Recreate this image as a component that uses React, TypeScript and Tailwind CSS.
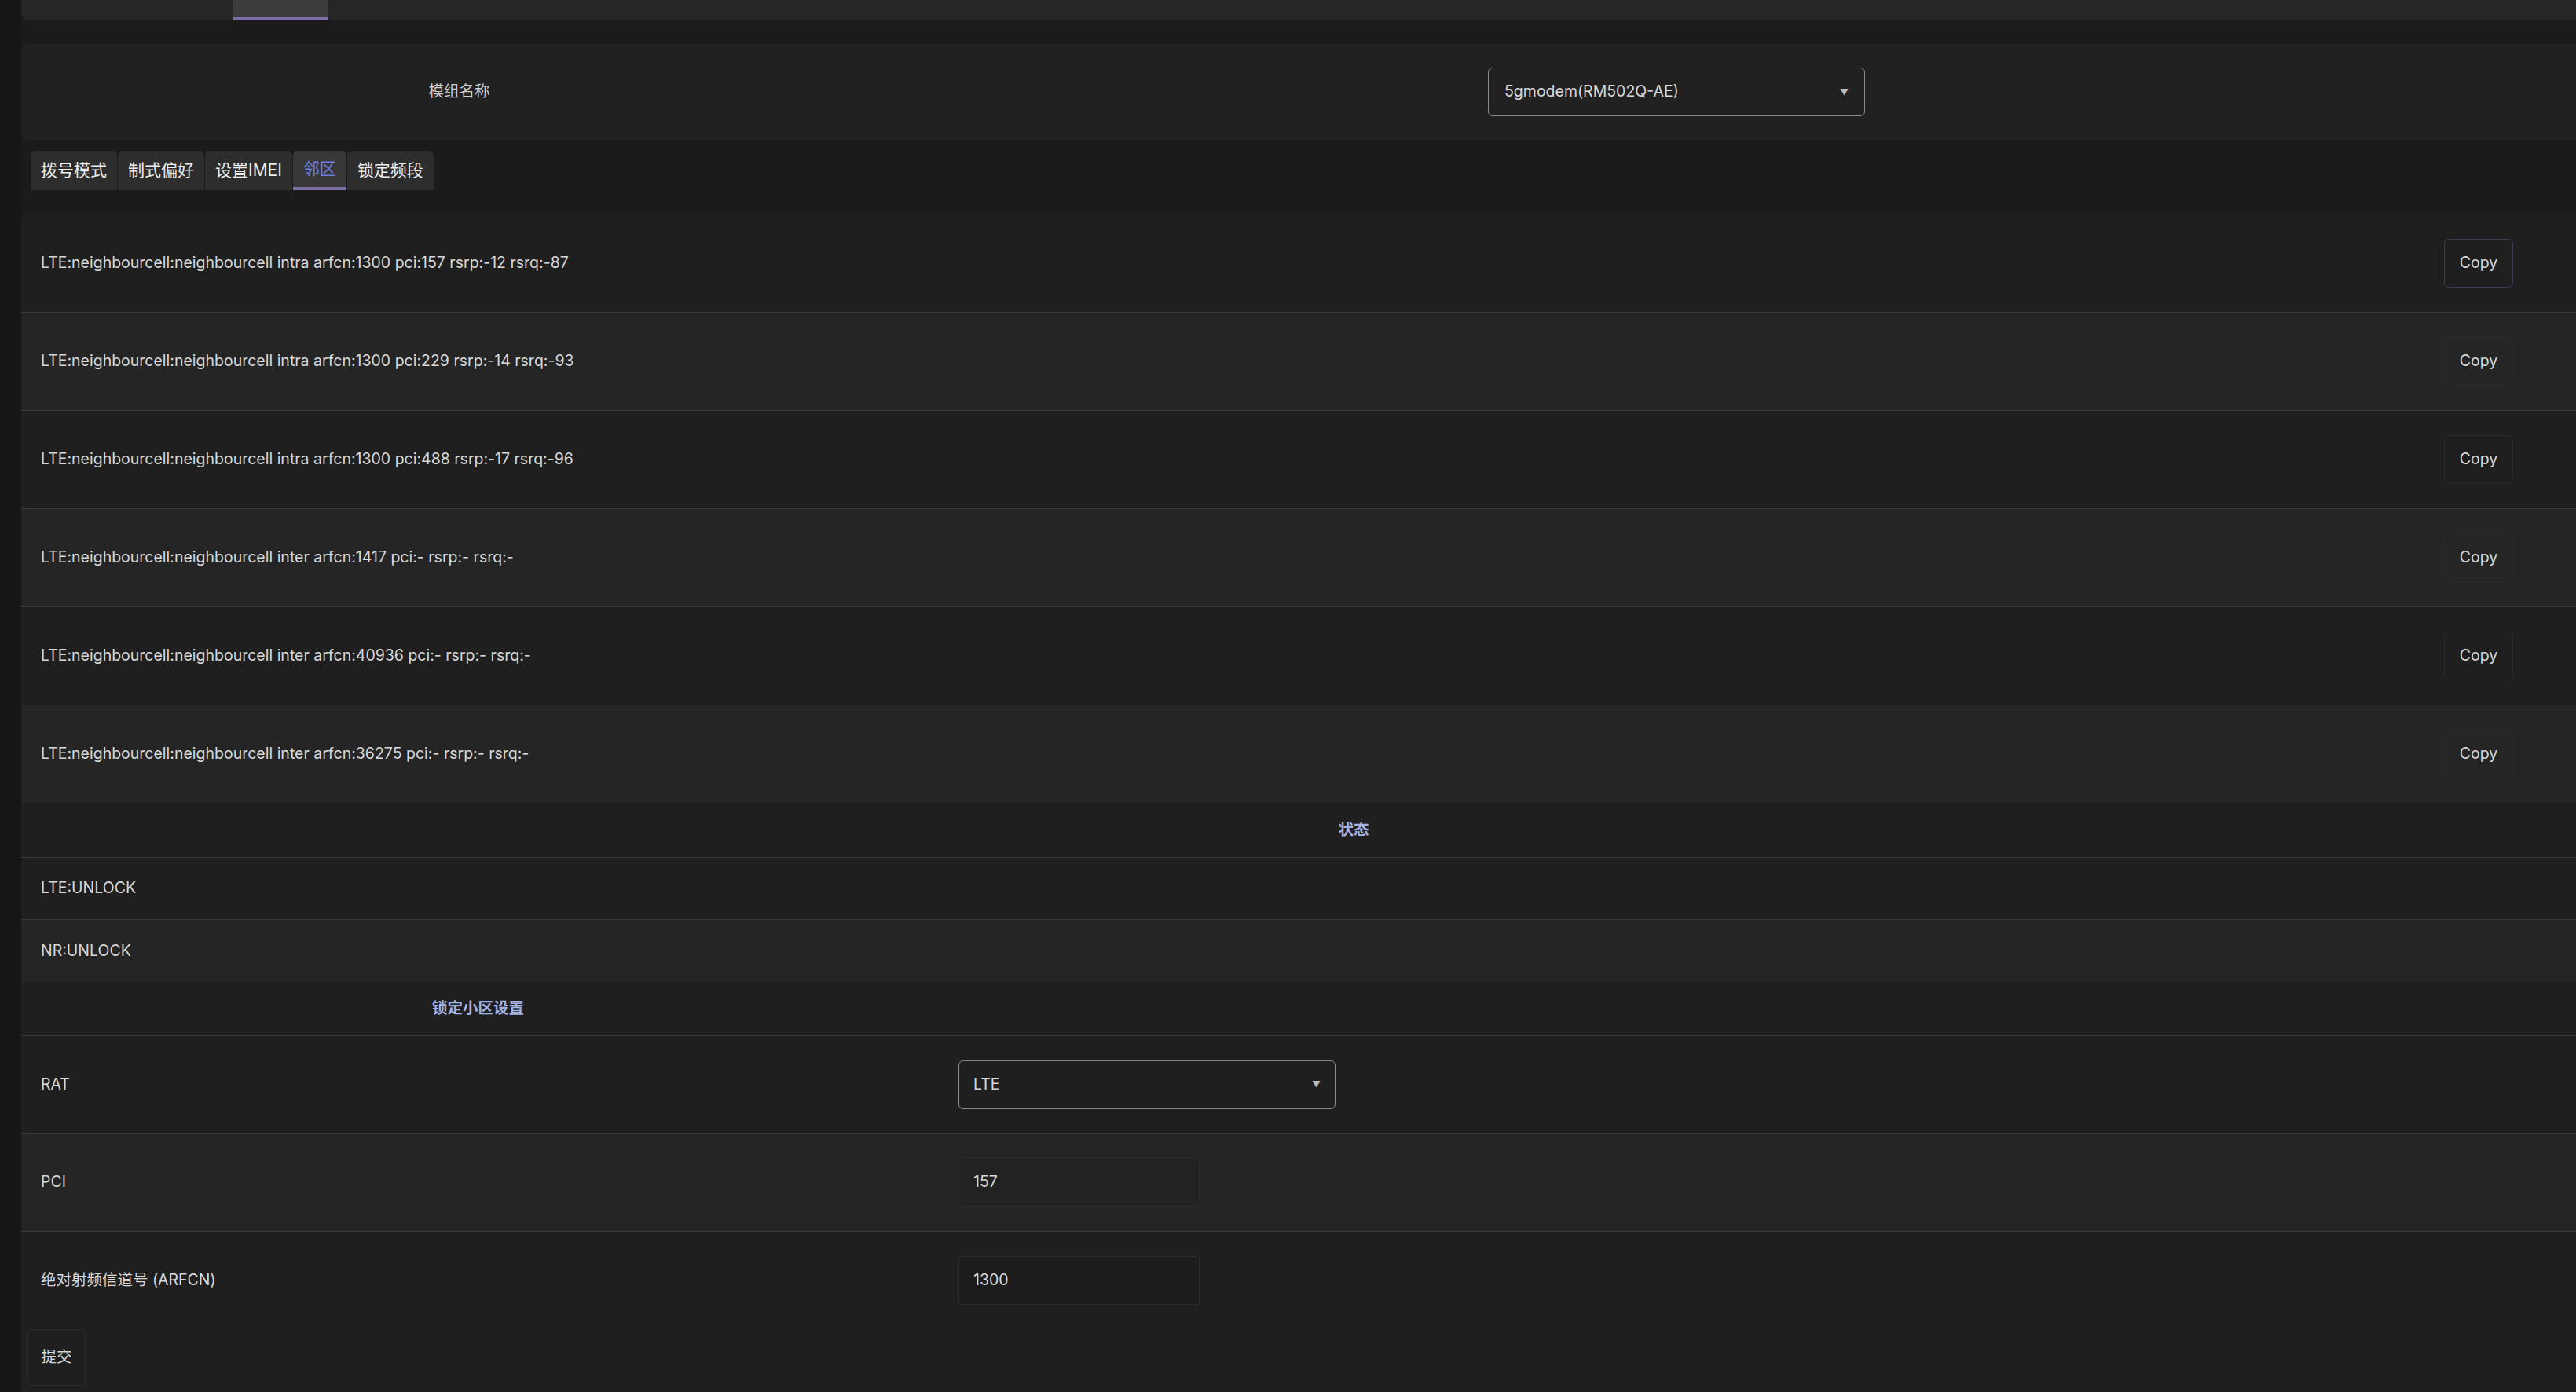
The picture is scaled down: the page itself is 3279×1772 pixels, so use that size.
import React from "react";

const rows = [
  "LTE:neighbourcell:neighbourcell intra arfcn:1300 pci:157 rsrp:-12 rsrq:-87",
  "LTE:neighbourcell:neighbourcell intra arfcn:1300 pci:229 rsrp:-14 rsrq:-93",
  "LTE:neighbourcell:neighbourcell intra arfcn:1300 pci:488 rsrp:-17 rsrq:-96",
  "LTE:neighbourcell:neighbourcell inter arfcn:1417 pci:- rsrp:- rsrq:-",
  "LTE:neighbourcell:neighbourcell inter arfcn:40936 pci:- rsrp:- rsrq:-",
  "LTE:neighbourcell:neighbourcell inter arfcn:36275 pci:- rsrp:- rsrq:-",
];

const Caret = () => <span className="text-[11px] text-[#bbb]">▼</span>;

export default function App() {
  const tabs = ["拨号模式", "制式偏好", "设置IMEI", "邻区", "锁定频段"];
  return (
    <div
      className="w-[3279px] h-[1772px] bg-[#1b1b1b] text-[#d8d8d8] text-[19.5px] overflow-hidden flex"
      style={{ fontFamily: "Inter, 'Noto Sans CJK SC', sans-serif" }}
    >
      <div className="w-[27px] shrink-0 bg-[#161616]" />
      <div className="flex-1 flex flex-col">
        <div className="h-[26px] shrink-0 bg-[#262626] rounded-bl-[10px] flex">
          <div className="w-[270px]" />
          <div className="w-[121px] bg-[#3c3c3c] border-b-[4px] border-[#7c6fa6]" />
        </div>
        <div className="h-[30px] shrink-0" />
        <div className="h-[122px] shrink-0 bg-[#212121] rounded-l-[10px] flex items-center">
          <div className="w-[1195px] flex justify-center text-[#cfcfcf]">
            <span className="ml-[-80px]">模组名称</span>
          </div>
          <div className="flex-1 flex justify-center">
            <div className="w-[480px] h-[62px] border border-[#8a8a8a] rounded-[6px] flex items-center justify-between px-[20px] ml-[-233px]">
              <span>5gmodem(RM502Q-AE)</span>
              <Caret />
            </div>
          </div>
        </div>
        <div className="flex mt-[14px] ml-[12px] h-[50px] shrink-0">
          {tabs.map((t, i) => (
            <div
              key={t}
              className={`h-[50px] px-[13px] mr-[1px] rounded-t-[6px] flex items-center text-[21px] ${
                i === 3
                  ? "bg-[#383838] text-[#6b7ee0] border-b-[4px] border-[#7c6fa6]"
                  : "bg-[#2d2d2d] text-[#eee]"
              }`}
            >
              {t}
            </div>
          ))}
        </div>
        <div className="h-[30px] shrink-0" />
        <div className="flex flex-col rounded-tl-[10px] overflow-hidden">
          {rows.map((r, i) => (
            <div
              key={i}
              className={`h-[125px] shrink-0 flex items-center justify-between pl-[25px] pr-[80px] ${
                i % 2 ? "bg-[#252525]" : "bg-[#1f1f1f]"
              } ${i > 0 ? "border-t border-[#3a3a3a]" : ""}`}
            >
              <span>{r}</span>
              <div
                className={`w-[88px] h-[62px] rounded-[6px] border flex items-center justify-center ${
                  i === 0 ? "border-[#3c3b52]" : "border-[#2a2a2a]"
                }`}
              >
                Copy
              </div>
            </div>
          ))}
          <div className="h-[70px] shrink-0 bg-[#1f1f1f] flex items-center justify-center border-b border-[#3a3a3a]">
            <span className="font-bold text-[#a3b3e3] ml-[140px]">状态</span>
          </div>
          <div className="h-[79px] shrink-0 bg-[#1f1f1f] flex items-center pl-[25px] border-b border-[#3a3a3a]">
            LTE:UNLOCK
          </div>
          <div className="h-[79px] shrink-0 bg-[#252525] flex items-center pl-[25px]">NR:UNLOCK</div>
          <div className="h-[69px] shrink-0 bg-[#1f1f1f] flex items-center border-b border-[#3a3a3a]">
            <div className="w-[1193px] flex justify-center">
              <span className="font-bold text-[#a3b3e3] ml-[-30px]">锁定小区设置</span>
            </div>
          </div>
          <div className="h-[124px] shrink-0 bg-[#1f1f1f] flex items-center border-b border-[#3a3a3a]">
            <div className="w-[1193px] pl-[25px]">RAT</div>
            <div className="w-[480px] h-[62px] border border-[#8a8a8a] rounded-[6px] flex items-center justify-between px-[18px]">
              <span>LTE</span>
              <Caret />
            </div>
          </div>
          <div className="h-[125px] shrink-0 bg-[#252525] flex items-center border-b border-[#3a3a3a]">
            <div className="w-[1193px] pl-[25px]">PCI</div>
            <div className="w-[307px] h-[62px] border border-[#2c2c2c] bg-[#222] rounded-[4px] flex items-center px-[18px]">
              157
            </div>
          </div>
          <div className="h-[124px] shrink-0 bg-[#1f1f1f] flex items-center">
            <div className="w-[1193px] pl-[25px]">绝对射频信道号 (ARFCN)</div>
            <div className="w-[307px] h-[62px] border border-[#2c2c2c] bg-[#1c1c1c] rounded-[4px] flex items-center px-[18px]">
              1300
            </div>
          </div>
          <div className="bg-[#1f1f1f] h-[90px] shrink-0 flex items-start pl-[8px]">
            <div className="w-[74px] h-[72px] border border-[#2c2c2c] rounded-[4px] flex items-center justify-center">
              提交
            </div>
          </div>
        </div>
      </div>
    </div>
  );
}
